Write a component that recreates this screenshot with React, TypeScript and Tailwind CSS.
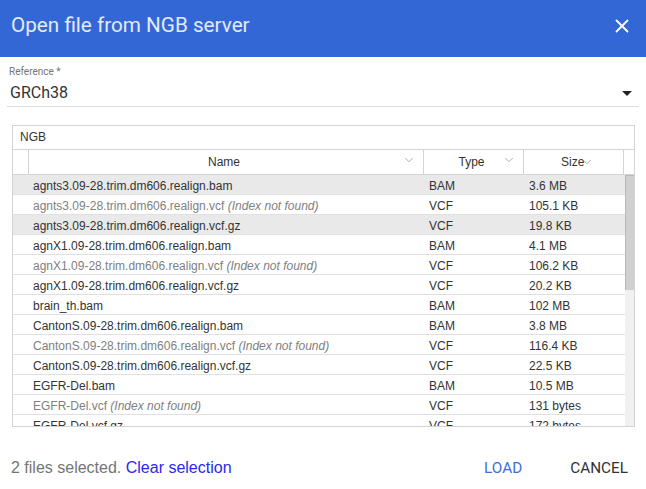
import { ChevronDown, X } from "lucide-react";

type Row = { name: string; type: string; size: string; selected?: boolean; noIndex?: boolean };

const rows: Row[] = [
  { name: "agnts3.09-28.trim.dm606.realign.bam", type: "BAM", size: "3.6 MB", selected: true },
  { name: "agnts3.09-28.trim.dm606.realign.vcf", type: "VCF", size: "105.1 KB", noIndex: true },
  { name: "agnts3.09-28.trim.dm606.realign.vcf.gz", type: "VCF", size: "19.8 KB", selected: true },
  { name: "agnX1.09-28.trim.dm606.realign.bam", type: "BAM", size: "4.1 MB" },
  { name: "agnX1.09-28.trim.dm606.realign.vcf", type: "VCF", size: "106.2 KB", noIndex: true },
  { name: "agnX1.09-28.trim.dm606.realign.vcf.gz", type: "VCF", size: "20.2 KB" },
  { name: "brain_th.bam", type: "BAM", size: "102 MB" },
  { name: "CantonS.09-28.trim.dm606.realign.bam", type: "BAM", size: "3.8 MB" },
  { name: "CantonS.09-28.trim.dm606.realign.vcf", type: "VCF", size: "116.4 KB", noIndex: true },
  { name: "CantonS.09-28.trim.dm606.realign.vcf.gz", type: "VCF", size: "22.5 KB" },
  { name: "EGFR-Del.bam", type: "BAM", size: "10.5 MB" },
  { name: "EGFR-Del.vcf", type: "VCF", size: "131 bytes", noIndex: true },
  { name: "EGFR-Del.vcf.gz", type: "VCF", size: "172 bytes" },
];

function FileRow({ row }: { row: Row }) {
  return (
    <div className={`flex h-5 shrink-0 items-center border-b border-[#e0e0e0] pt-[2px] ${row.selected ? "bg-[#e9e9e9]" : "bg-white"}`}>
      <div className={`w-[411px] shrink-0 truncate pl-[20px] ${row.noIndex ? "text-[#808080]" : "text-[#333333]"}`}>
        {row.name}
        {row.noIndex && <i> (Index not found)</i>}
      </div>
      <div className="w-[100px] shrink-0 pl-[5px] text-[#333333]">{row.type}</div>
      <div className="w-[100px] shrink-0 pl-[5px] text-[#333333]">{row.size}</div>
    </div>
  );
}

export default function App() {
  return (
    <div className="flex h-[489px] w-[646px] flex-col overflow-hidden bg-white font-['Roboto',sans-serif]">
      <div className="flex h-[57px] shrink-0 items-center justify-between bg-[#3367d6] pl-[11px] pr-[13px] pb-[6px]">
        <h2 className="text-[20.7px] text-[#e3eafa]">Open file from NGB server</h2>
        <X className="h-[22px] w-[22px] text-white" strokeWidth={2} />
      </div>

      <div className="mx-[7px] mt-[9px] border-b border-[#dcdcdc] pb-[1px]">
        <div className="pl-[2px] text-[10px] leading-[12px] text-[#757575]">Reference *</div>
        <div className="mt-[3px] flex h-[24px] items-center justify-between pl-[3px] pr-[7px]">
          <span className="text-[16px] text-[#333333]">GRCh38</span>
          <span className="h-0 w-0 border-x-[5px] border-t-[5px] border-x-transparent border-t-[#222222]" />
        </div>
      </div>

      <div className="ml-[12px] mr-[11px] mt-[18px] flex h-[302px] flex-col border border-[#d4d4d4] font-['Liberation_Sans',sans-serif] text-[12px]">
        <div className="flex h-6 shrink-0 items-center border-b border-[#d4d4d4] pb-[2px] pl-[7px] text-[#333333]">NGB</div>
        <div className="flex h-[25px] shrink-0 items-stretch border-b border-[#d4d4d4] text-[#333333]">
          <div className="w-[16px] shrink-0 border-r border-[#d4d4d4]" />
          <div className="relative flex w-[395px] shrink-0 items-center justify-center border-r border-[#d4d4d4] pr-[4px] pb-[1px]">
            Name
            <ChevronDown className="absolute right-[7px] top-[3px] h-[14px] w-[14px] text-[#777777]" strokeWidth={1} />
          </div>
          <div className="relative flex w-[100px] shrink-0 items-center justify-center border-r border-[#d4d4d4] pr-[4px] pb-[1px]">
            Type
            <ChevronDown className="absolute right-[7px] top-[3px] h-[14px] w-[14px] text-[#777777]" strokeWidth={1} />
          </div>
          <div className="flex w-[100px] shrink-0 items-center border-r border-[#d4d4d4] pb-[1px] pl-[37px]">
            Size
            <ChevronDown className="-ml-[4px] h-[14px] w-[14px] text-[#777777]" strokeWidth={1} />
          </div>
        </div>
        <div className="flex min-h-0 flex-1">
          <div className="flex min-w-0 flex-1 flex-col overflow-hidden">
            {rows.map((row) => (
              <FileRow key={row.name} row={row} />
            ))}
          </div>
          <div className="w-[9px] shrink-0 bg-[#f1f1f1]">
            <div className="h-[115px] border-l border-t border-[#b8b8b8] bg-[#d0d0d0]" />
          </div>
        </div>
      </div>

      <div className="flex flex-1 items-center justify-between pl-[11px] pr-[18px] pt-[20px]">
        <div className="font-['Liberation_Sans',sans-serif] text-[16px] text-[#757575]">
          2 files selected. <span className="text-[#2a2ae8]">Clear selection</span>
        </div>
        <div className="flex gap-[48px] text-[15.3px]">
          <span className="text-[#3f6fd8]">LOAD</span>
          <span className="text-[#333333]">CANCEL</span>
        </div>
      </div>
    </div>
  );
}
